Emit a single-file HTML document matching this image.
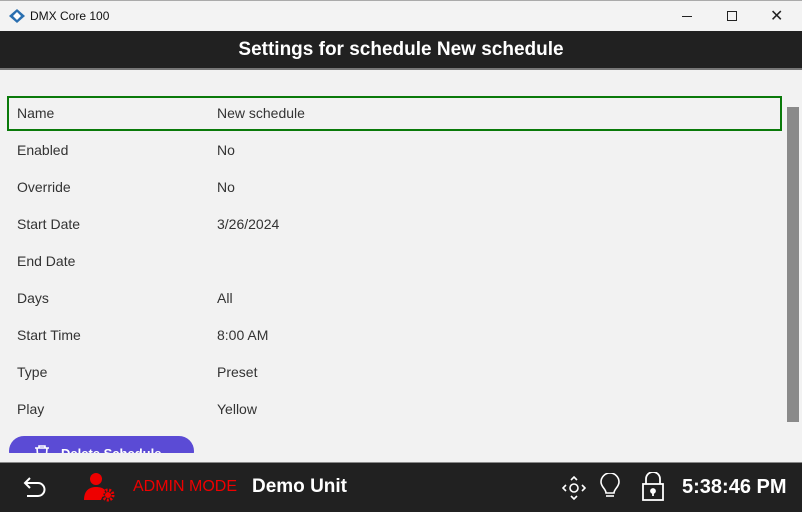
<!DOCTYPE html>
<html><head><meta charset="utf-8"><style>
*{margin:0;padding:0;box-sizing:border-box}
body{width:802px;height:512px;overflow:hidden;background:#f2f2f2;font-family:"Liberation Sans",sans-serif;position:relative}
.tb{position:absolute;left:0;top:0;width:802px;height:31px;background:#f3f3f3;border-top:1px solid #aaa}
.tb .t{position:absolute;left:30px;top:8px;font-size:12px;color:#111}
.hd{position:absolute;left:0;top:31px;width:802px;height:39px;background:#212121;border-bottom:2px solid #777;color:#fff;font-weight:bold;font-size:19px;text-align:center;line-height:37px}
.row{position:absolute;left:17px;font-size:14px;color:#333}
.v{left:217px}
.sel{position:absolute;left:7px;top:96px;width:775px;height:35px;border:2px solid #0a7a0a}
.sb{position:absolute;left:787px;top:107px;width:12px;height:315px;background:#8a8a8a}
.clip{position:absolute;left:0;top:420px;width:780px;height:33px;overflow:hidden}
.btn{position:absolute;left:9px;top:16px;width:185px;height:30px;border-radius:15px;background:#5b4bd5;color:#fff;font-weight:bold;font-size:13px;padding:10px 0 0 52px}
.ft{position:absolute;left:0;top:462px;width:802px;height:50px;background:#212121;border-top:1px solid #888}
.ft span{position:absolute;top:14px}
</style></head><body>
<div class="tb">
<svg style="position:absolute;left:9px;top:8px" width="16" height="14" viewBox="0 0 16 14"><path d="M8 0L16 7 8 14 0 7Z" fill="#2a6fb0"/><path d="M8 3L12 7 8 11 4 7Z" fill="#fff"/></svg>
<div class="t">DMX Core 100</div>
<div style="position:absolute;left:682px;top:15px;width:10px;height:1px;background:#222"></div>
<div style="position:absolute;left:727px;top:10px;width:10px;height:10px;border:1px solid #222"></div>
<div style="position:absolute;left:770px;top:5px;font-size:16px;color:#222">✕</div>
</div>
<div class="hd">Settings for schedule New schedule</div>
<div class="clip"><div class="btn"><svg style="position:absolute;left:24px;top:8px" width="18" height="18" viewBox="0 0 18 18" fill="none" stroke="#fff" stroke-width="1.6"><path d="M2 4H16M6 4V2H12V4M4 4L5 16H13L14 4"/></svg>Delete Schedule</div></div>
<div class="sel"></div>
<div class="row" style="top:105px">Name</div><div class="row v" style="top:105px">New schedule</div>
<div class="row" style="top:142px">Enabled</div><div class="row v" style="top:142px">No</div>
<div class="row" style="top:179px">Override</div><div class="row v" style="top:179px">No</div>
<div class="row" style="top:216px">Start Date</div><div class="row v" style="top:216px">3/26/2024</div>
<div class="row" style="top:253px">End Date</div>
<div class="row" style="top:290px">Days</div><div class="row v" style="top:290px">All</div>
<div class="row" style="top:327px">Start Time</div><div class="row v" style="top:327px">8:00 AM</div>
<div class="row" style="top:364px">Type</div><div class="row v" style="top:364px">Preset</div>
<div class="row" style="top:401px">Play</div><div class="row v" style="top:401px">Yellow</div>
<div class="sb"></div>
<div class="ft">
<svg style="position:absolute;left:22px;top:11px" width="28" height="28" viewBox="0 0 28 28" fill="none" stroke="#fff" stroke-width="2"><path d="M8 4L3 9 8 14"/><path d="M3 9H16A6.5 6.5 0 0 1 16 22H5"/></svg>
<svg style="position:absolute;left:84px;top:9px" width="32" height="30" viewBox="0 0 32 30"><circle cx="12" cy="7" r="6" fill="#e00"/><path d="M0 28C0 18 6 15 12 15 16 15 19 16 21 18L17 28Z" fill="#e00"/><circle cx="24" cy="23" r="5" fill="none" stroke="#e00" stroke-width="3" stroke-dasharray="2 1.5"/><circle cx="24" cy="23" r="3" fill="#e00"/></svg>
<span style="left:133px;color:#e00;font-size:16px;top:15px">ADMIN MODE</span>
<span style="left:252px;color:#fff;font-size:19px;font-weight:bold;top:13px">Demo Unit</span>
<svg style="position:absolute;left:562px;top:13px" width="24" height="24" viewBox="0 0 24 24" fill="none" stroke="#fff" stroke-width="1.6"><circle cx="12" cy="12" r="4"/><path d="M9 4L12 1 15 4M9 20L12 23 15 20M4 9L1 12 4 15M20 9L23 12 20 15"/></svg>
<svg style="position:absolute;left:599px;top:10px" width="22" height="28" viewBox="0 0 22 28" fill="none" stroke="#fff" stroke-width="1.6"><path d="M7 20C7 16 2 14 2 9A9 9 0 0 1 20 9C20 14 15 16 15 20Z"/><path d="M7 23H15"/></svg>
<svg style="position:absolute;left:641px;top:9px" width="24" height="30" viewBox="0 0 24 30" fill="none" stroke="#fff" stroke-width="1.8"><path d="M5 12V7A7 7 0 0 1 19 7V12"/><rect x="2" y="12" width="20" height="16"/><circle cx="12" cy="19" r="2" fill="#fff"/><path d="M12 20V24"/></svg>
<span style="left:682px;color:#fff;font-size:20px;font-weight:bold;top:13px">5:38:46 PM</span>
</div>
</body></html>
